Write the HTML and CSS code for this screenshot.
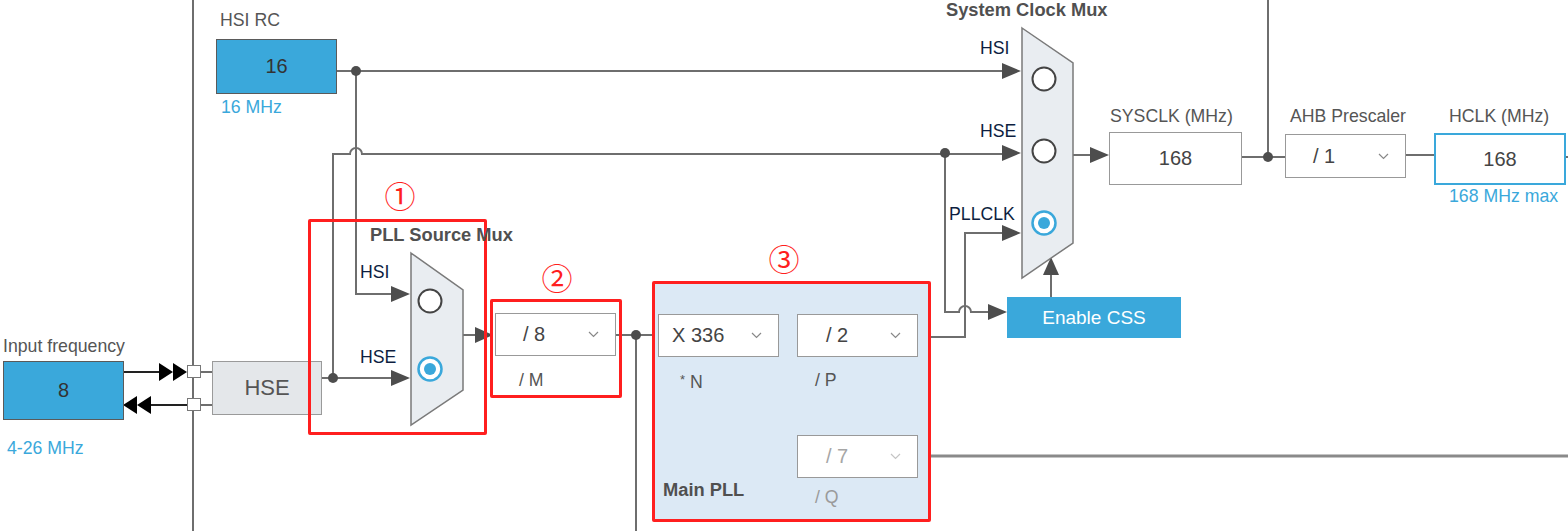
FILE: index.html
```html
<!DOCTYPE html>
<html>
<head>
<meta charset="utf-8">
<link rel="stylesheet" href="styles.css">
</head>
<body>
<div class="canvas">
  <svg class="wires" width="1568" height="531" viewBox="0 0 1568 531">
    <g class="wire">
      <path d="M193 0 V531"/>
      <path d="M336 71 H1006"/>
      <path d="M356 71 V294 H395"/>
      <path d="M333 378 V154 H350 a6 6 0 0 1 12 0 H1006"/>
      <path d="M321 378 H395"/>
      <path d="M463 335 H480"/>
      <path d="M615 335 H658"/>
      <path d="M636 335 V531"/>
      <path d="M778 335 H797"/>
      <path d="M784 335 V456 H797"/>
      <path d="M917 337 H965 V233 H1006"/>
      <path d="M945 153 V312 H959 a6 6 0 0 1 12 0 H992"/>
      <path d="M1073 155 H1094"/>
      <path d="M1051 297 V272"/>
      <path d="M1241 157 H1285"/>
      <path d="M1268 0 V157"/>
      <path d="M1405 155 H1434"/>
      <path d="M1565 157 H1568"/>
      <path d="M200 372 H212"/>
      <path d="M200 405 H212"/>
    </g>
    <path class="wire-q" d="M917 456 H1568"/>
    <g class="wire-black">
      <path d="M123 372 H165"/>
      <path d="M187 405 H140"/>
    </g>
    <g class="dot">
      <circle cx="356" cy="71" r="5"/>
      <circle cx="333" cy="378" r="5"/>
      <circle cx="636" cy="335" r="5"/>
      <circle cx="945" cy="153" r="5"/>
      <circle cx="1268" cy="157" r="5"/>
    </g>
    <g class="arrow">
      <polygon points="391,286 410,294 391,302"/>
      <polygon points="391,370 410,378 391,386"/>
      <polygon points="475,327 493,335 475,343"/>
      <polygon points="1002,63 1021,71 1002,79"/>
      <polygon points="1002,145 1021,153 1002,161"/>
      <polygon points="1002,225 1021,233 1002,241"/>
      <polygon points="1090,147 1109,155 1090,163"/>
      <polygon points="988,304 1007,312 988,320"/>
      <polygon points="1043,275 1051,257 1059,275"/>
    </g>
    <g class="arrow-black">
      <polygon points="159,363 173,372 159,381"/>
      <polygon points="173,363 187,372 173,381"/>
      <polygon points="137,396 123,405 137,414"/>
      <polygon points="151,396 137,405 151,414"/>
    </g>
    <polygon class="mux" points="411,253 463,290 463,390 411,425"/>
    <polygon class="mux" points="1022,28 1073,63 1073,243 1022,278"/>
    <g class="radio">
      <circle cx="430" cy="301" r="11.5"/>
      <circle cx="1044" cy="79" r="11.5"/>
      <circle cx="1044" cy="151" r="11.5"/>
    </g>
    <g class="radio-on">
      <circle cx="430" cy="369" r="11.5"/>
      <circle cx="1044" cy="223" r="11.5"/>
    </g>
    <g class="radio-dot">
      <circle cx="430" cy="369" r="6"/>
      <circle cx="1044" cy="223" r="6"/>
    </g>
  </svg>

  <div class="lbl t-hsirc">HSI RC</div>
  <div class="box blue box-hsi">16</div>
  <div class="lbl hint t-16mhz">16 MHz</div>

  <div class="lbl t-input">Input frequency</div>
  <div class="box blue box-input">8</div>
  <div class="lbl hint t-426">4-26 MHz</div>

  <div class="sq sq-top"></div>
  <div class="sq sq-bot"></div>
  <div class="box box-hse">HSE</div>

  <div class="redbox rb1"></div>
  <div class="mark mark1">①</div>
  <div class="lbl bold t-pllmux">PLL Source Mux</div>
  <div class="lbl navy t-pm-hsi">HSI</div>
  <div class="lbl navy t-pm-hse">HSE</div>

  <div class="redbox rb2"></div>
  <div class="mark mark2">②</div>
  <div class="sel sel-m"><span class="val">/ 8</span><svg class="chev" width="11" height="7" viewBox="0 0 11 7"><polyline points="1,1 5.5,5.5 10,1"/></svg></div>
  <div class="lbl t-m">/ M</div>

  <div class="pll"></div>
  <div class="mark mark3">③</div>
  <div class="sel sel-n"><span class="val">X 336</span><svg class="chev" width="11" height="7" viewBox="0 0 11 7"><polyline points="1,1 5.5,5.5 10,1"/></svg></div>
  <div class="lbl t-n"><span class="star">*</span> N</div>
  <div class="sel sel-p"><span class="val">/ 2</span><svg class="chev" width="11" height="7" viewBox="0 0 11 7"><polyline points="1,1 5.5,5.5 10,1"/></svg></div>
  <div class="lbl t-p">/ P</div>
  <div class="sel sel-q off"><span class="val">/ 7</span><svg class="chev" width="11" height="7" viewBox="0 0 11 7"><polyline points="1,1 5.5,5.5 10,1"/></svg></div>
  <div class="lbl dim t-q">/ Q</div>
  <div class="lbl bold t-mainpll">Main PLL</div>

  <div class="lbl bold t-sysmux">System Clock Mux</div>
  <div class="lbl navy t-sm-hsi">HSI</div>
  <div class="lbl navy t-sm-hse">HSE</div>
  <div class="lbl navy t-sm-pll">PLLCLK</div>
  <div class="css-btn">Enable CSS</div>

  <div class="lbl t-sysclk">SYSCLK (MHz)</div>
  <div class="box box-sys">168</div>
  <div class="lbl t-ahb">AHB Prescaler</div>
  <div class="sel sel-ahb"><span class="val">/ 1</span><svg class="chev" width="11" height="7" viewBox="0 0 11 7"><polyline points="1,1 5.5,5.5 10,1"/></svg></div>
  <div class="lbl t-hclk">HCLK (MHz)</div>
  <div class="box box-hclk">168</div>
  <div class="lbl hint t-hclkmax">168 MHz max</div>
</div>
</body>
</html>
```

FILE: styles.css
```css
html, body {
  margin: 0;
  padding: 0;
  background: #fff;
}

.canvas {
  position: relative;
  width: 1568px;
  height: 531px;
  overflow: hidden;
  background: #fff;
  font-family: "Liberation Sans", Arial, sans-serif;
  color: #555;
}

.wires {
  position: absolute;
  left: 0;
  top: 0;
}

.wire path {
  fill: none;
  stroke: #6e6e6e;
  stroke-width: 2;
}

.wire-q {
  fill: none;
  stroke: #8a8a8a;
  stroke-width: 3;
}

.wire-black path {
  fill: none;
  stroke: #222;
  stroke-width: 2;
}

.dot circle {
  fill: #4d4d4d;
}

.arrow polygon {
  fill: #4d4d4d;
}

.arrow-black polygon {
  fill: #000;
}

.mux {
  fill: #e9edf1;
  stroke: #7a7a7a;
  stroke-width: 1.5;
}

.radio circle {
  fill: #fff;
  stroke: #444;
  stroke-width: 2;
}

.radio-on circle {
  fill: #fff;
  stroke: #3aa8db;
  stroke-width: 2.5;
}

.radio-dot circle {
  fill: #3aa8db;
}

/* labels */
.lbl {
  position: absolute;
  font-size: 17.7px;
  line-height: 18px;
  white-space: nowrap;
  color: #555;
}

.lbl.bold {
  font-weight: bold;
  font-size: 18.3px;
  color: #505050;
}

.lbl.hint {
  color: #3aa8db;
}

.lbl.navy {
  color: #0d1e40;
}

.lbl.dim {
  color: #9a9a9a;
}

.t-hsirc { left: 220px; top: 11px; }
.t-16mhz { left: 221px; top: 98px; }
.t-input { left: 3px; top: 337px; }
.t-426 { left: 7px; top: 439px; }
.t-pllmux { left: 370px; top: 226px; }
.t-pm-hsi { left: 360px; top: 263px; }
.t-pm-hse { left: 360px; top: 348px; }
.t-m { left: 519px; top: 371px; }
.t-n { left: 680px; top: 371px; }
.t-p { left: 815px; top: 371px; }
.t-q { left: 815px; top: 488px; }
.t-mainpll { left: 663px; top: 481px; }
.t-sysmux { left: 946px; top: 1px; }
.t-sm-hsi { left: 980px; top: 39px; }
.t-sm-hse { left: 980px; top: 122px; }
.t-sm-pll { left: 949px; top: 205px; }
.t-sysclk { left: 1110px; top: 107px; }
.t-ahb { left: 1290px; top: 107px; }
.t-hclk { left: 1449px; top: 107px; }
.t-hclkmax { left: 1449px; top: 187px; }

.star {
  font-size: 13px;
  vertical-align: 4px;
}

/* boxes */
.box {
  position: absolute;
  box-sizing: border-box;
  display: flex;
  align-items: center;
  justify-content: center;
  font-size: 20px;
  color: #444;
  background: #fff;
  border: 1px solid #999;
}

.box.blue {
  background: #3aa8db;
  border-color: #5a5a5a;
  color: #333;
}

.box-hsi { left: 216px; top: 39px; width: 121px; height: 55px; }
.box-input { left: 3px; top: 361px; width: 121px; height: 59px; }

.box-hse {
  left: 212px;
  top: 361px;
  width: 110px;
  height: 54px;
  background: #e4e7ea;
  border-color: #9a9a9a;
  font-size: 22px;
  color: #555;
}

.box-sys { left: 1109px; top: 132px; width: 133px; height: 53px; }

.box-hclk {
  left: 1434px;
  top: 133px;
  width: 132px;
  height: 52px;
  border: 2px solid #3aa8db;
}

.sq {
  position: absolute;
  box-sizing: border-box;
  left: 187px;
  width: 14px;
  height: 13px;
  background: #fff;
  border: 1px solid #777;
}

.sq-top { top: 365px; }
.sq-bot { top: 398px; }

/* red annotation boxes */
.redbox {
  position: absolute;
  box-sizing: border-box;
  border: 3px solid #ff1f1f;
  border-radius: 2px;
}

.rb1 { left: 308px; top: 219px; width: 179px; height: 216px; }
.rb2 { left: 490px; top: 299px; width: 132px; height: 99px; }

.pll {
  position: absolute;
  box-sizing: border-box;
  left: 652px;
  top: 281px;
  width: 279px;
  height: 241px;
  background: #dce9f5;
  border: 3px solid #ff1f1f;
  border-radius: 2px;
}

.mark {
  position: absolute;
  width: 40px;
  height: 40px;
  display: flex;
  align-items: center;
  justify-content: center;
  font-family: "Noto Sans CJK JP", "Noto Sans CJK SC", "DejaVu Sans", sans-serif;
  font-size: 31px;
  line-height: 40px;
  color: #ff1f1f;
}

.mark1 { left: 380px; top: 175px; }
.mark2 { left: 537px; top: 257px; }
.mark3 { left: 764px; top: 238px; }

/* selects */
.sel {
  position: absolute;
  box-sizing: border-box;
  display: flex;
  align-items: center;
  width: 121px;
  height: 43px;
  padding-left: 27px;
  background: #fff;
  border: 1px solid #999;
  font-size: 20px;
  color: #444;
}

.sel .val {
  flex: 1;
}

.sel .chev {
  margin-right: 16px;
}

.chev polyline {
  fill: none;
  stroke: #888;
  stroke-width: 1.2;
}

.sel.off {
  color: #a6a6a6;
}

.sel.off .chev polyline {
  stroke: #c4c4c4;
}

.sel-m { left: 495px; top: 313px; }
.sel-n { left: 658px; top: 314px; padding-left: 13px; }
.sel-p { left: 797px; top: 314px; padding-left: 28px; }
.sel-q { left: 797px; top: 435px; padding-left: 28px; }
.sel-ahb { left: 1285px; top: 134px; height: 44px; padding-left: 27px; }

.css-btn {
  position: absolute;
  left: 1007px;
  top: 297px;
  width: 174px;
  height: 41px;
  display: flex;
  align-items: center;
  justify-content: center;
  background: #3aa8db;
  color: #fff;
  font-size: 19px;
}
```
